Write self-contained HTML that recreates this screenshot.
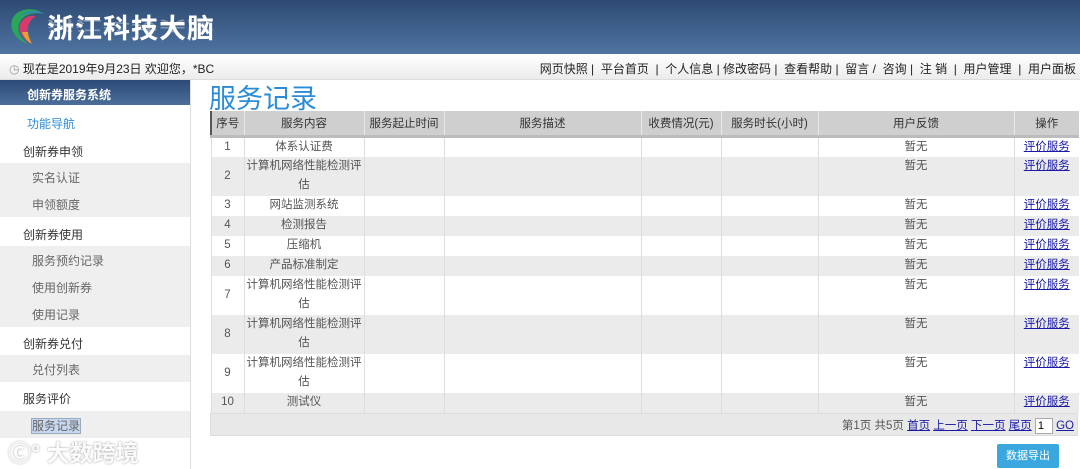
<!DOCTYPE html>
<html><head><meta charset="utf-8"><style>
*{margin:0;padding:0;box-sizing:border-box}
body{width:1080px;height:469px;overflow:hidden;background:#fff;font-family:"Liberation Sans","Noto Sans CJK SC",sans-serif;font-size:12px;color:#333;position:relative}
.hd{position:absolute;left:0;top:0;width:1080px;height:54px;background:linear-gradient(#2d4a73,#4f74a1)}
.logo{position:absolute;left:47px;top:7px;font-size:27px;font-weight:bold;color:#fff;letter-spacing:1px}
.refl{position:absolute;left:47px;top:36px;font-size:27px;font-weight:bold;color:rgba(255,255,255,.35);transform:scaleY(-0.5);transform-origin:top;letter-spacing:1px}
.bar{position:absolute;left:0;top:54px;width:1080px;height:26px;background:linear-gradient(#fff,#ececec);border-bottom:1px solid #ddd}
.bar .l{position:absolute;left:9px;top:6px;font-size:12px;color:#222}
.bar .r{position:absolute;right:4px;top:6px;font-size:12px;color:#222}
.side{position:absolute;left:0;top:80px;width:191px;height:389px;border-right:1px solid #ddd}
.sh{height:25px;background:linear-gradient(#2c4a75,#4b6e9a);color:#fff;font-weight:bold;padding:6px 0 0 27px;font-size:12px}
.si{position:absolute;left:0;width:190px;font-size:12px}
.g{background:#efefef}
h1{position:absolute;left:209px;top:77px;font-size:27px;font-weight:normal;color:#2c8cd6}
table{position:absolute;left:210px;top:111px;width:868px;border-collapse:collapse;font-size:11.5px;table-layout:fixed}
th{background:#cfcfcf;font-weight:normal;height:25px;border-left:1px solid #e8e8e8;border-bottom:3px solid #bcbcbc;color:#333;padding:0}
th:first-child{border-left:2px solid #555}
td{border-left:1px solid #ddd;text-align:center;vertical-align:middle;line-height:19px;color:#555;padding:0 2px;height:20px}
tr.d td{height:39px}
tr.e td{background:#ebebeb}
tr.o td{background:#fff}
td.fb,td.op{vertical-align:top}
a{color:#1a1aa6;text-decoration:underline}
.pg{position:absolute;left:210px;top:413px;width:868px;height:23px;background:#e8e8e8;border:1px solid #ddd;text-align:right;padding:3px 3px 0 0;color:#555;font-size:11.5px}
.pg input{width:18px;height:16px;font-size:11px;border:1px solid #aaa;padding-left:2px}
.btn{position:absolute;left:997px;top:444px;width:62px;height:24px;background:#3aa8df;color:#fff;font-size:11px;text-align:center;line-height:24px;border-radius:2px}
.wm{position:absolute;left:8px;top:434px;font-size:23px;color:rgba(255,255,255,.95);text-shadow:0 0 2px #999;font-weight:bold}
</style></head><body>
<div class="hd">
<svg style="position:absolute;left:6px;top:6px" width="42" height="40" viewBox="0 0 42 40"><path d="M38 8C28 0 10 2 6 14C3 24 10 34 22 38C14 32 10 24 14 16C18 8 28 6 38 8Z" fill="#2aa65a"/><path d="M30 10C20 8 12 16 14 24C15 30 20 34 24 38C22 30 20 22 24 16C26 12 30 10 30 10Z" fill="#d93a6a"/><path d="M38 8C32 4 20 4 14 10C22 6 32 6 38 8Z" fill="#3b7ad0"/><path d="M16 26C18 32 22 36 26 38C24 34 22 30 22 26Z" fill="#e8a030"/></svg>
<div class="logo">浙江科技大脑</div><div class="refl">浙江科技大脑</div></div>
<div class="bar"><div class="l"><span style="color:#999">◷</span> 现在是2019年9月23日 欢迎您，*BC</div>
<div class="r">网页快照 | &nbsp;平台首页 &nbsp;| &nbsp;个人信息 | 修改密码 | &nbsp;查看帮助 | &nbsp;留言 / &nbsp;咨询 | &nbsp;注 销 &nbsp;| &nbsp;用户管理 &nbsp;| &nbsp;用户面板</div></div>
<div class="side"><div class="sh">创新券服务系统</div>
<div class="si" style="top:35px;padding-left:27px;color:#2c8cd6">功能导航</div>
<div class="si" style="top:63px;padding-left:23px">创新券申领</div>
<div class="si g" style="top:83px;height:54px"></div>
<div class="si" style="top:89px;padding-left:32px;color:#666">实名认证</div>
<div class="si" style="top:116px;padding-left:32px;color:#666">申领额度</div>
<div class="si" style="top:146px;padding-left:23px">创新券使用</div>
<div class="si g" style="top:166px;height:81px"></div>
<div class="si" style="top:172px;padding-left:32px;color:#666">服务预约记录</div>
<div class="si" style="top:199px;padding-left:32px;color:#666">使用创新券</div>
<div class="si" style="top:226px;padding-left:32px;color:#666">使用记录</div>
<div class="si" style="top:255px;padding-left:23px">创新券兑付</div>
<div class="si g" style="top:275px;height:27px"></div>
<div class="si" style="top:281px;padding-left:32px;color:#666">兑付列表</div>
<div class="si" style="top:310px;padding-left:23px">服务评价</div>
<div class="si g" style="top:331px;height:27px"></div>
<div class="si" style="top:337px;padding-left:32px;color:#666"><span style="background:#c8d8f0;outline:1px solid #9ab">服务记录</span></div>
</div>
<div class="wm">Ⓒ° 大数跨境</div>
<h1>服务记录</h1>
<table>
<colgroup><col style="width:33px"><col style="width:120px"><col style="width:80px"><col style="width:197px"><col style="width:80px"><col style="width:97px"><col style="width:196px"><col style="width:65px"></colgroup>
<tr><th>序号</th><th>服务内容</th><th>服务起止时间</th><th>服务描述</th><th>收费情况(元)</th><th>服务时长(小时)</th><th>用户反馈</th><th>操作</th></tr>
<tr class="o"><td>1</td><td>体系认证费</td><td></td><td></td><td></td><td></td><td class="fb">暂无</td><td class="op"><a>评价服务</a></td></tr>
<tr class="e d"><td>2</td><td>计算机网络性能检测评估</td><td></td><td></td><td></td><td></td><td class="fb">暂无</td><td class="op"><a>评价服务</a></td></tr>
<tr class="o"><td>3</td><td>网站监测系统</td><td></td><td></td><td></td><td></td><td class="fb">暂无</td><td class="op"><a>评价服务</a></td></tr>
<tr class="e"><td>4</td><td>检测报告</td><td></td><td></td><td></td><td></td><td class="fb">暂无</td><td class="op"><a>评价服务</a></td></tr>
<tr class="o"><td>5</td><td>压缩机</td><td></td><td></td><td></td><td></td><td class="fb">暂无</td><td class="op"><a>评价服务</a></td></tr>
<tr class="e"><td>6</td><td>产品标准制定</td><td></td><td></td><td></td><td></td><td class="fb">暂无</td><td class="op"><a>评价服务</a></td></tr>
<tr class="o d"><td>7</td><td>计算机网络性能检测评估</td><td></td><td></td><td></td><td></td><td class="fb">暂无</td><td class="op"><a>评价服务</a></td></tr>
<tr class="e d"><td>8</td><td>计算机网络性能检测评估</td><td></td><td></td><td></td><td></td><td class="fb">暂无</td><td class="op"><a>评价服务</a></td></tr>
<tr class="o d"><td>9</td><td>计算机网络性能检测评估</td><td></td><td></td><td></td><td></td><td class="fb">暂无</td><td class="op"><a>评价服务</a></td></tr>
<tr class="e"><td>10</td><td>测试仪</td><td></td><td></td><td></td><td></td><td class="fb">暂无</td><td class="op"><a>评价服务</a></td></tr>
</table>
<div class="pg">第1页 共5页 <a>首页</a> <a>上一页</a> <a>下一页</a> <a>尾页</a> <input value="1"> <a>GO</a></div>
<div class="btn">数据导出</div>
</body></html>
